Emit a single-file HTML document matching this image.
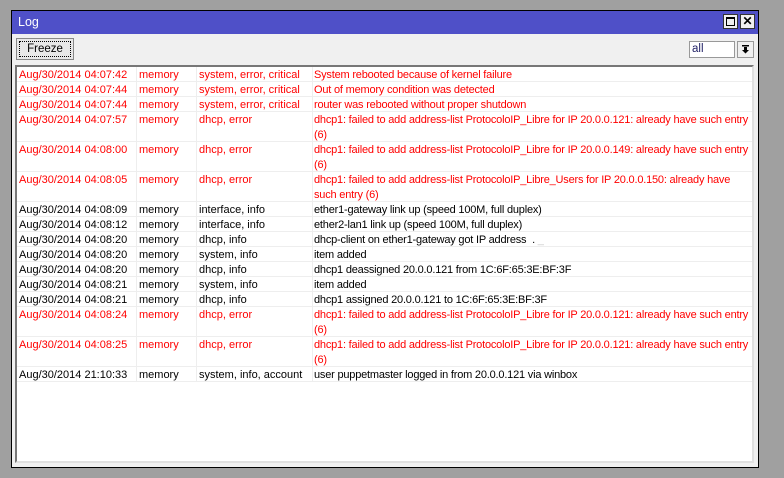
<!DOCTYPE html>
<html><head><style>
*{margin:0;padding:0;box-sizing:border-box}
body{width:784px;height:478px;background:#a0a0a0;position:relative;overflow:hidden;font-family:"Liberation Sans",sans-serif;font-size:11px}
#win{position:absolute;left:11px;top:10px;width:748px;height:458px;border:1px solid #000;background:#f0f0f0}
#title{position:absolute;left:0;top:0;width:746px;height:23px;background:#4f50c8;color:#fff;font-size:12.5px;padding:4px 0 0 6px}
.tb{position:absolute;top:3px;width:15px;height:15px;background:#f0f0f0;border:1px solid #333}
#freeze{position:absolute;left:4px;top:27px;width:58px;height:22px;border:1px solid #888;background:#e8e8e8;text-align:center;line-height:20px;font-size:11.5px}
#freeze span{position:absolute;left:2px;top:2px;right:2px;bottom:2px;border:1px dotted #000}
#sel{position:absolute;left:677px;top:30px;width:46px;height:17px;border:1px solid #999;background:#fff;padding:1px 2px;font-size:11.5px;color:#226}
#arr{position:absolute;left:725px;top:30px;width:17px;height:17px;border:1px solid #999;background:#f0f0f0}
#tbl{position:absolute;left:3px;top:54px;width:739px;height:398px;background:#fff;border-top:2px solid #777;border-left:2px solid #777;border-right:2px solid #e0e0e0;border-bottom:2px solid #e0e0e0}
.r{position:absolute;left:0;width:735px;border-bottom:1px solid #eee;height:15px}
.r div{position:absolute;top:0;height:100%;border-right:1px solid #eee;padding:1px 0 0 2px;line-height:15px;white-space:nowrap;overflow:hidden}
.c1{left:0;width:120px}.c2{left:120px;width:60px}.c3{left:180px;width:116px}
.r .c4{left:296px;width:437px;border-right:none;letter-spacing:-0.2px;overflow:visible;padding-left:1px}
.red{color:#f00}
</style></head><body>
<div id="win">
<div id="title">Log</div>
<div class="tb" style="left:711px"><div style="position:absolute;left:2px;top:2px;width:9px;height:9px;border:1px solid #000;border-top-width:2px"></div></div>
<div class="tb" style="left:728px;text-align:center;font-size:12px;font-weight:bold;line-height:13px">✕</div>
<div id="freeze"><span></span>Freeze</div>
<div id="sel">all</div>
<div id="arr"><svg width="15" height="15" viewBox="0 0 15 15"><rect x="4" y="3" width="7" height="1.5" fill="#000"/><path d="M6 5h3v3h2l-3.5 3.5L4 8h2z" fill="#000"/></svg></div>
<div id="tbl">
<div class="r red" style="top:0"><div class="c1">Aug/30/2014 04:07:42</div><div class="c2">memory</div><div class="c3">system, error, critical</div><div class="c4">System rebooted because of kernel failure</div></div>
<div class="r red" style="top:15px"><div class="c1">Aug/30/2014 04:07:44</div><div class="c2">memory</div><div class="c3">system, error, critical</div><div class="c4">Out of memory condition was detected</div></div>
<div class="r red" style="top:30px"><div class="c1">Aug/30/2014 04:07:44</div><div class="c2">memory</div><div class="c3">system, error, critical</div><div class="c4">router was rebooted without proper shutdown</div></div>
<div class="r red" style="top:45px;height:30px"><div class="c1">Aug/30/2014 04:07:57</div><div class="c2">memory</div><div class="c3">dhcp, error</div><div class="c4">dhcp1: failed to add address-list ProtocoloIP_Libre for IP 20.0.0.121: already have such entry<br>(6)</div></div>
<div class="r red" style="top:75px;height:30px"><div class="c1">Aug/30/2014 04:08:00</div><div class="c2">memory</div><div class="c3">dhcp, error</div><div class="c4">dhcp1: failed to add address-list ProtocoloIP_Libre for IP 20.0.0.149: already have such entry<br>(6)</div></div>
<div class="r red" style="top:105px;height:30px"><div class="c1">Aug/30/2014 04:08:05</div><div class="c2">memory</div><div class="c3">dhcp, error</div><div class="c4">dhcp1: failed to add address-list ProtocoloIP_Libre_Users for IP 20.0.0.150: already have<br>such entry (6)</div></div>
<div class="r" style="top:135px"><div class="c1">Aug/30/2014 04:08:09</div><div class="c2">memory</div><div class="c3">interface, info</div><div class="c4">ether1-gateway link up (speed 100M, full duplex)</div></div>
<div class="r" style="top:150px"><div class="c1">Aug/30/2014 04:08:12</div><div class="c2">memory</div><div class="c3">interface, info</div><div class="c4">ether2-lan1 link up (speed 100M, full duplex)</div></div>
<div class="r" style="top:165px"><div class="c1">Aug/30/2014 04:08:20</div><div class="c2">memory</div><div class="c3">dhcp, info</div><div class="c4">dhcp-client on ether1-gateway got IP address &nbsp;. <span style="color:#ccc">_</span></div></div>
<div class="r" style="top:180px"><div class="c1">Aug/30/2014 04:08:20</div><div class="c2">memory</div><div class="c3">system, info</div><div class="c4">item added</div></div>
<div class="r" style="top:195px"><div class="c1">Aug/30/2014 04:08:20</div><div class="c2">memory</div><div class="c3">dhcp, info</div><div class="c4">dhcp1 deassigned 20.0.0.121 from 1C:6F:65:3E:BF:3F</div></div>
<div class="r" style="top:210px"><div class="c1">Aug/30/2014 04:08:21</div><div class="c2">memory</div><div class="c3">system, info</div><div class="c4">item added</div></div>
<div class="r" style="top:225px"><div class="c1">Aug/30/2014 04:08:21</div><div class="c2">memory</div><div class="c3">dhcp, info</div><div class="c4">dhcp1 assigned 20.0.0.121 to 1C:6F:65:3E:BF:3F</div></div>
<div class="r red" style="top:240px;height:30px"><div class="c1">Aug/30/2014 04:08:24</div><div class="c2">memory</div><div class="c3">dhcp, error</div><div class="c4">dhcp1: failed to add address-list ProtocoloIP_Libre for IP 20.0.0.121: already have such entry<br>(6)</div></div>
<div class="r red" style="top:270px;height:30px"><div class="c1">Aug/30/2014 04:08:25</div><div class="c2">memory</div><div class="c3">dhcp, error</div><div class="c4">dhcp1: failed to add address-list ProtocoloIP_Libre for IP 20.0.0.121: already have such entry<br>(6)</div></div>
<div class="r" style="top:300px"><div class="c1">Aug/30/2014 21:10:33</div><div class="c2">memory</div><div class="c3">system, info, account</div><div class="c4">user puppetmaster logged in from 20.0.0.121 via winbox</div></div>
</div>
</div>
</body></html>
